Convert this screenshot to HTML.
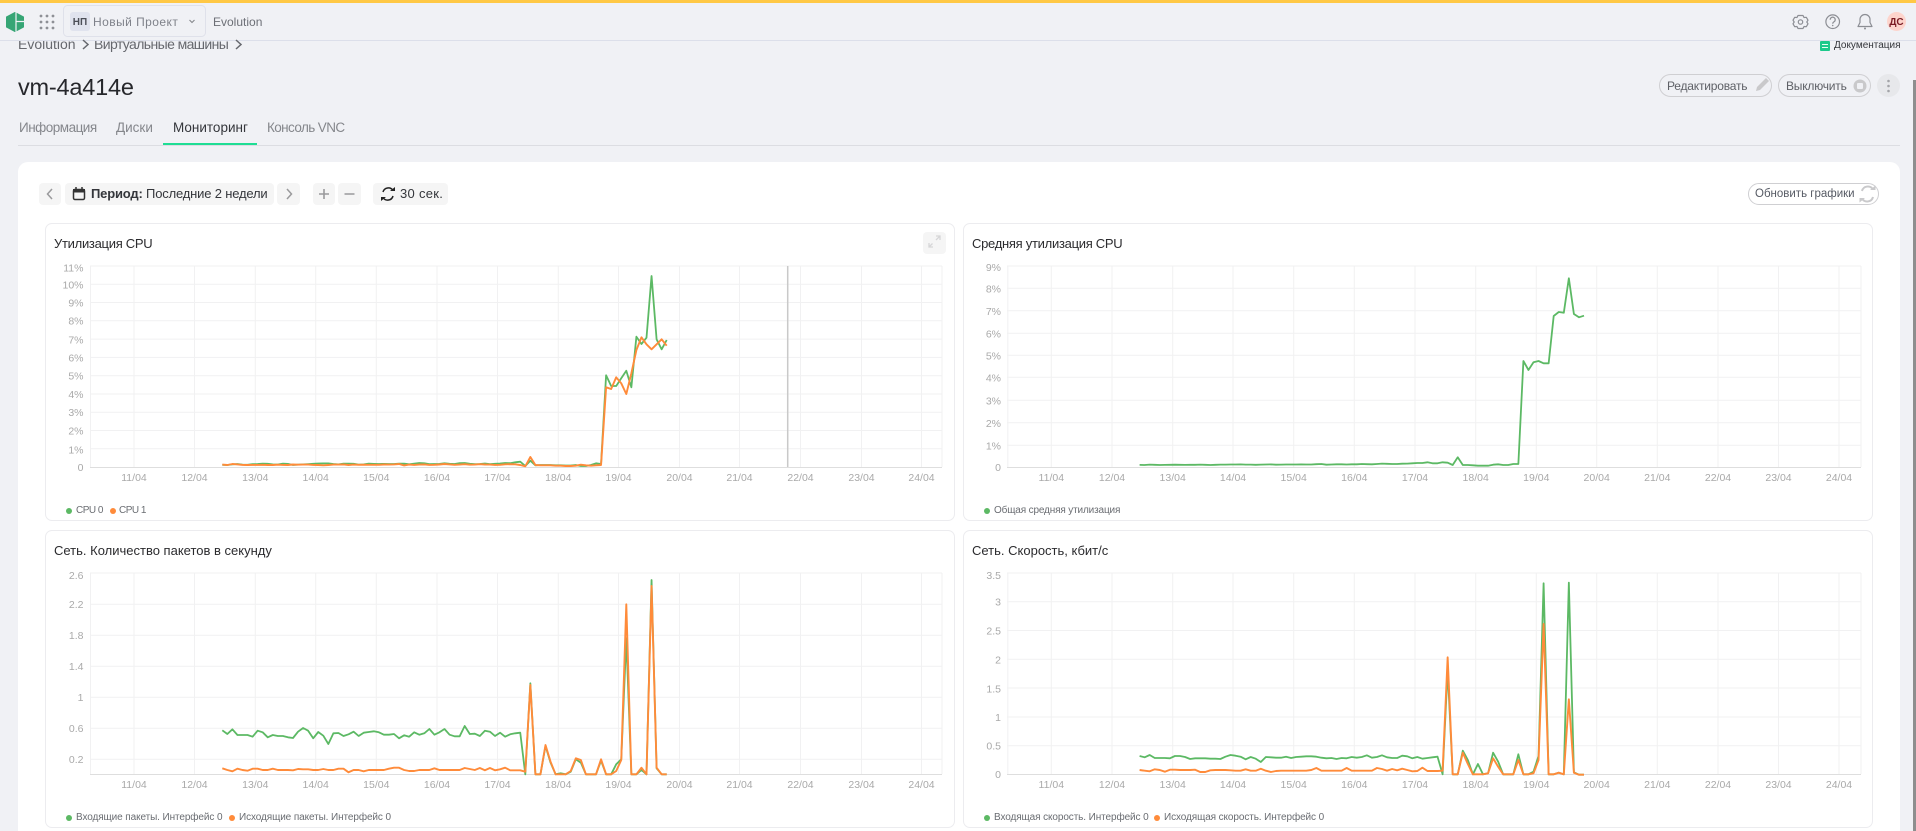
<!DOCTYPE html>
<html lang="ru"><head><meta charset="utf-8"><title>vm-4a414e</title>
<style>
html,body{margin:0;padding:0;width:1916px;height:831px;overflow:hidden;background:#f0f1f5;font-family:"Liberation Sans","Noto Sans CJK SC",sans-serif}
.a{position:absolute;white-space:nowrap}
.t{line-height:20px;height:20px}
.pill{position:absolute;box-sizing:border-box;border:1px solid #cfcfd2;border-radius:12px;height:23px}
.btn{position:absolute;background:#f5f5f5;border-radius:4px;height:22px;top:183px}
svg{position:absolute;left:0;top:0;overflow:hidden}
.gl{stroke:#f1f1f2;stroke-width:1;fill:none}
.ax{stroke:#dedede;stroke-width:1;fill:none}
.s{fill:none;vector-effect:non-scaling-stroke;stroke-linejoin:round}
.g{stroke:#5cb964;stroke-width:1.8}
.o{stroke:#ff8b3a;stroke-width:1.9}
text{font-family:"Liberation Sans",sans-serif}
.lab text{font-size:10.5px;fill:#a9a9a9}
.xl text{text-anchor:middle}
.yl text{text-anchor:end}
.card{position:absolute;box-sizing:border-box;width:910px;height:298px;background:#fff;border:1px solid #ececef;border-radius:7px}
.ct{font-size:13px;color:#2b2b2e}
.lg{font-size:10px;color:#6a6d72}
.d{position:absolute;width:6px;height:6px;border-radius:50%}
</style></head><body>

<!-- content under header -->
<div class="a t" style="left:18px;top:34px;font-size:14px;color:#66686e">Evolution</div>
<div class="a t" style="left:94px;top:34px;font-size:14px;letter-spacing:-.6px;color:#66686e">Виртуальные машины</div>
<svg width="1916" height="831" style="z-index:1"><path d="M83 40l5 4.500-5 4.500M236 40l5 4.500-5 4.500" fill="none" stroke="#66686e" stroke-width="1.500"/></svg>
<div class="a" style="left:18px;top:72px;font-size:23.500px;line-height:30px;color:#26272b;letter-spacing:-.2px">vm-4a414e</div>
<div class="a t" style="left:19px;top:118px;font-size:13.500px;letter-spacing:-.5px;color:#85878c">Информация</div>
<div class="a t" style="left:116px;top:118px;font-size:13.500px;color:#85878c">Диски</div>
<div class="a t" style="left:173px;top:118px;font-size:13.500px;color:#34363b">Мониторинг</div>
<div class="a t" style="left:267px;top:118px;font-size:13.500px;letter-spacing:-.6px;color:#85878c">Консоль VNC</div>
<div class="a" style="left:18px;top:145px;width:1882px;height:1px;background:#dcdde2"></div>
<div class="a" style="left:163px;top:143px;width:94px;height:2px;background:#1fdd94"></div>

<div class="a" style="left:1820px;top:41px;width:9.500px;height:10px;background:#1cc98b;border-radius:1px"></div>
<div class="a" style="left:1822px;top:44px;width:5.500px;height:1px;background:#e8fff4"></div>
<div class="a" style="left:1822px;top:47px;width:5.500px;height:1px;background:#e8fff4"></div>
<div class="a t" style="left:1834px;top:36px;font-size:10px;color:#33353a">Документация</div>

<div class="pill" style="left:1659px;top:74px;width:113px"></div>
<div class="a t" style="left:1667px;top:76px;font-size:12px;letter-spacing:-.2px;color:#5e6066">Редактировать</div>
<div class="pill" style="left:1778px;top:74px;width:93px"></div>
<div class="a t" style="left:1786px;top:76px;font-size:12px;letter-spacing:-.2px;color:#5e6066">Выключить</div>
<div class="a" style="left:1877px;top:74px;width:23px;height:23px;border-radius:50%;background:#e7e8eb"></div>
<svg width="1916" height="831" style="z-index:1">
<path d="M1756 91l1-4 9-9 3 3-9 9z" fill="#c9c9cb"/>
<circle cx="1860" cy="86" r="6.500" fill="#c9c9cb"/><rect x="1857" y="83" width="6" height="6" rx="1" fill="#f0f1f5"/>
<circle cx="1888.500" cy="81" r="1.300" fill="#a3a4a8"/><circle cx="1888.500" cy="86" r="1.300" fill="#a3a4a8"/><circle cx="1888.500" cy="91" r="1.300" fill="#a3a4a8"/>
</svg>

<!-- white panel -->
<div class="a" style="left:18px;top:162px;width:1882px;height:669px;background:#fff;border-radius:10px 10px 0 0"></div>
<div class="btn" style="left:39px;width:22px"></div>
<div class="btn" style="left:65px;width:209px"></div>
<div class="btn" style="left:277px;width:23px"></div>
<div class="btn" style="left:313px;width:22px"></div>
<div class="btn" style="left:338px;width:23px"></div>
<div class="btn" style="left:373px;width:75px"></div>
<div class="a t" style="left:91px;top:184px;font-size:13px;letter-spacing:-.18px;color:#34363b"><b>Период:</b> Последние 2 недели</div>
<div class="a t" style="left:400px;top:184px;font-size:13px;letter-spacing:.3px;color:#34363b">30 сек.</div>
<div class="pill" style="left:1748px;top:183px;width:131px;height:22px"></div>
<div class="a t" style="left:1755px;top:184px;font-size:11.500px;color:#565a64">Обновить графики</div>

<!-- chart cards -->
<div class="card" style="left:45px;top:223px"></div>
<div class="card" style="left:963px;top:223px"></div>
<div class="card" style="left:45px;top:530px"></div>
<div class="card" style="left:963px;top:530px"></div>
<div class="a t ct" style="left:54px;top:234px;letter-spacing:-.28px">Утилизация CPU</div>
<div class="a t ct" style="left:972px;top:234px;letter-spacing:-.28px">Средняя утилизация CPU</div>
<div class="a t ct" style="left:54px;top:541px">Сеть. Количество пакетов в секунду</div>
<div class="a t ct" style="left:972px;top:541px">Сеть. Скорость, кбит/с</div>
<div class="a" style="left:923px;top:232px;width:23px;height:22px;background:#f5f5f5;border-radius:4px"></div>

<div class="d" style="left:66px;top:508px;background:#5cb964"></div><div class="a t lg" style="left:76px;top:501px;letter-spacing:-.5px">CPU 0</div>
<div class="d" style="left:110px;top:508px;background:#ff8b3a"></div><div class="a t lg" style="left:119px;top:501px;letter-spacing:-.5px">CPU 1</div>
<div class="d" style="left:984px;top:508px;background:#5cb964"></div><div class="a t lg" style="left:994px;top:501px;letter-spacing:-.15px">Общая средняя утилизация</div>
<div class="d" style="left:66px;top:815px;background:#5cb964"></div><div class="a t lg" style="left:76px;top:808px;letter-spacing:-.1px">Входящие пакеты. Интерфейс 0</div>
<div class="d" style="left:229px;top:815px;background:#ff8b3a"></div><div class="a t lg" style="left:239px;top:808px;letter-spacing:-.1px">Исходящие пакеты. Интерфейс 0</div>
<div class="d" style="left:984px;top:815px;background:#5cb964"></div><div class="a t lg" style="left:994px;top:808px;letter-spacing:-.1px">Входящая скорость. Интерфейс 0</div>
<div class="d" style="left:1154px;top:815px;background:#ff8b3a"></div><div class="a t lg" style="left:1164px;top:808px;letter-spacing:-.1px">Исходящая скорость. Интерфейс 0</div>

<svg width="1916" height="831" viewBox="0 0 1916 831">
<!-- toolbar icons -->
<path d="M52 189l-4.500 5 4.500 5M287 189l4.500 5-4.500 5" fill="none" stroke="#9a9a9c" stroke-width="1.500"/>
<path d="M319 194h10M324 189v10M344.500 194h10" stroke="#9a9a9c" stroke-width="1.600" fill="none"/>
<rect x="73.500" y="189.500" width="11" height="10" rx="1.500" fill="none" stroke="#333" stroke-width="1.500"/><rect x="73" y="189" width="12" height="3.500" fill="#333"/><path d="M76 187v3M82 187v3" stroke="#333" stroke-width="1.500"/>
<path d="M383 192a5.500 5.500 0 0 1 10-1.500M393 196a5.500 5.500 0 0 1-10 1.500" fill="none" stroke="#222" stroke-width="1.500"/><path d="M390 191h5v-4zM386 197h-5v4z" fill="#222"/>
<path d="M1862 191a6 6 0 0 1 11-1.500M1873 197a6 6 0 0 1-11 1.500" fill="none" stroke="#c9c9cb" stroke-width="2"/><path d="M1870 190h5.500v-4.500zM1865 198h-5.500v4.500z" fill="#c9c9cb"/>
<path d="M932.500 243.500L929 247M929 243v4h4M936 240l4-4M936 236h4v4" fill="none" stroke="#d6d6d8" stroke-width="1.300"/>

<!-- chart 1 grid -->
<path class="gl" d="M90.500 266V467M134 266V467M194.500 266V467M255.300 266V467M315.700 266V467M376.300 266V467M437 266V467M497.500 266V467M558.300 266V467M618.500 266V467M679.500 266V467M739.500 266V467M800.500 266V467M861.500 266V467M921.500 266V467M942 266V467"/>
<path class="gl" d="M90 266H942M90 284.300H942M90 302.500H942M90 320.800H942M90 339.100H942M90 357.400H942M90 375.700H942M90 394H942M90 412.300H942M90 430.500H942M90 448.800H942"/>
<path class="ax" d="M90 467.500H942"/>
<path d="M787.700 266V467" stroke="#c9c9c9" stroke-width="1.500"/>
<!-- chart 2 grid -->
<path class="gl" d="M1007.800 266V467M1051.300 266V467M1112 266V467M1172.700 266V467M1233 266V467M1293.700 266V467M1354.300 266V467M1415 266V467M1475.700 266V467M1536.300 266V467M1596.700 266V467M1657.300 266V467M1718 266V467M1778.500 266V467M1839 266V467M1861 266V467"/>
<path class="gl" d="M1007 266H1861M1007 288.300H1861M1007 310.700H1861M1007 333.300H1861M1007 355.300H1861M1007 377.300H1861M1007 400.300H1861M1007 422.700H1861M1007 445.300H1861"/>
<path class="ax" d="M1007 467.500H1861"/>
<!-- chart 3 grid -->
<path class="gl" d="M90.500 573V774M134 573V774M194.500 573V774M255.300 573V774M315.700 573V774M376.300 573V774M437 573V774M497.500 573V774M558.300 573V774M618.500 573V774M679.500 573V774M739.500 573V774M800.500 573V774M861.500 573V774M921.500 573V774M942 573V774"/>
<path class="gl" d="M90 573H942M90 604.300H942M90 635.300H942M90 666.300H942M90 697.300H942M90 728.300H942M90 759.300H942"/>
<path class="ax" d="M90 774.500H942"/>
<!-- chart 4 grid -->
<path class="gl" d="M1007.800 573V774M1051.300 573V774M1112 573V774M1172.700 573V774M1233 573V774M1293.700 573V774M1354.300 573V774M1415 573V774M1475.700 573V774M1536.300 573V774M1596.700 573V774M1657.300 573V774M1718 573V774M1778.500 573V774M1839 573V774M1861 573V774"/>
<path class="gl" d="M1007 573H1861M1007 601.700H1861M1007 630.500H1861M1007 659.300H1861M1007 688H1861M1007 717H1861M1007 745.700H1861"/>
<path class="ax" d="M1007 774.500H1861"/>

<!-- axis labels -->
<g class="lab xl">
<g transform="translate(0,481)"><text x="134">11/04</text><text x="194.500">12/04</text><text x="255.300">13/04</text><text x="315.700">14/04</text><text x="376.300">15/04</text><text x="437">16/04</text><text x="497.500">17/04</text><text x="558.300">18/04</text><text x="618.500">19/04</text><text x="679.500">20/04</text><text x="739.500">21/04</text><text x="800.500">22/04</text><text x="861.500">23/04</text><text x="921.500">24/04</text></g>
<g transform="translate(0,481)"><text x="1051.300">11/04</text><text x="1112">12/04</text><text x="1172.700">13/04</text><text x="1233">14/04</text><text x="1293.700">15/04</text><text x="1354.300">16/04</text><text x="1415">17/04</text><text x="1475.700">18/04</text><text x="1536.300">19/04</text><text x="1596.700">20/04</text><text x="1657.300">21/04</text><text x="1718">22/04</text><text x="1778.500">23/04</text><text x="1839">24/04</text></g>
<g transform="translate(0,788)"><text x="134">11/04</text><text x="194.500">12/04</text><text x="255.300">13/04</text><text x="315.700">14/04</text><text x="376.300">15/04</text><text x="437">16/04</text><text x="497.500">17/04</text><text x="558.300">18/04</text><text x="618.500">19/04</text><text x="679.500">20/04</text><text x="739.500">21/04</text><text x="800.500">22/04</text><text x="861.500">23/04</text><text x="921.500">24/04</text></g>
<g transform="translate(0,788)"><text x="1051.300">11/04</text><text x="1112">12/04</text><text x="1172.700">13/04</text><text x="1233">14/04</text><text x="1293.700">15/04</text><text x="1354.300">16/04</text><text x="1415">17/04</text><text x="1475.700">18/04</text><text x="1536.300">19/04</text><text x="1596.700">20/04</text><text x="1657.300">21/04</text><text x="1718">22/04</text><text x="1778.500">23/04</text><text x="1839">24/04</text></g>
</g>
<g class="lab yl">
<text x="83.500" y="271.500">11%</text><text x="83.500" y="288.500">10%</text><text x="83.500" y="306.500">9%</text><text x="83.500" y="324.500">8%</text><text x="83.500" y="343.500">7%</text><text x="83.500" y="361.500">6%</text><text x="83.500" y="379.500">5%</text><text x="83.500" y="398">4%</text><text x="83.500" y="416">3%</text><text x="83.500" y="434.500">2%</text><text x="83.500" y="453.500">1%</text><text x="83.500" y="471">0</text>
<text x="1001" y="271">9%</text><text x="1001" y="292.500">8%</text><text x="1001" y="315">7%</text><text x="1001" y="337.500">6%</text><text x="1001" y="359.500">5%</text><text x="1001" y="381.500">4%</text><text x="1001" y="404.500">3%</text><text x="1001" y="427">2%</text><text x="1001" y="449.500">1%</text><text x="1001" y="471">0</text>
<text x="83.500" y="579">2.6</text><text x="83.500" y="608">2.2</text><text x="83.500" y="639">1.8</text><text x="83.500" y="670">1.4</text><text x="83.500" y="701">1</text><text x="83.500" y="732">0.6</text><text x="83.500" y="763">0.2</text>
<text x="1001" y="579">3.5</text><text x="1001" y="605.500">3</text><text x="1001" y="634.500">2.5</text><text x="1001" y="663.500">2</text><text x="1001" y="692.500">1.5</text><text x="1001" y="721">1</text><text x="1001" y="749.500">0.5</text><text x="1001" y="778">0</text>
</g>

<!-- series: x is sample index -->
<g transform="translate(222.300,0) scale(5.050,1)">
<polyline class="s g" points="0,464.9 1,465 2,464.4 3,464 4,464.6 5,464.8 6,464.2 7,464 8,463.6 9,463.8 10,464.4 11,464.5 12,463.7 13,463.9 14,465 15,464.6 16,464.4 17,464.1 18,463.8 19,463.5 20,463.4 21,463.4 22,464 23,464.4 24,463.7 25,463.6 26,463.8 27,464.6 28,464.4 29,463.7 30,463.9 31,464 32,463.9 33,464 34,464 35,463.7 36,463.6 37,464.3 38,463.6 39,463 40,463.3 41,464.1 42,464 43,463.9 44,463.3 45,463.8 46,464 47,463.1 48,463 49,463.8 50,464.1 51,464 52,463.5 53,464.2 54,463.8 55,463.5 56,463 57,463.2 58,462.3 59,461.7 60,466 61,460.7 62,465.3 63,465 64,465 65,465 66,465.3 67,465.3 68,465.5 69,465.5 70,465 71,466 72,466 73,465 74,463.3 75,464 76,375.3 77,386 78,386 79,378.3 80,370.7 81,387.3 82,336.7 83,344 84,337.7 85,276 86,339.3 87,349.3 88,340"/>
<polyline class="s o" points="0,464.6 1,465 2,464 3,464.4 4,464.9 5,465 6,464.9 7,464.9 8,464.8 9,465 10,465 11,464.7 12,464.9 13,465 14,464.5 15,464.7 16,464.6 17,464.6 18,464.9 19,465 20,465.3 21,465 22,464.6 23,464.6 24,464.4 25,465 26,464.6 27,464.8 28,464.7 29,464.8 30,464.8 31,464.8 32,464.5 33,464.6 34,464.4 35,464 36,465.4 37,464.6 38,464.9 39,464.6 40,464.4 41,464.9 42,464.8 43,464.5 44,464 45,464.4 46,464.8 47,464.6 48,464.2 49,464.7 50,464.6 51,464.2 52,464.5 53,464.6 54,464.9 55,464.8 56,464.3 57,464.2 58,464.3 59,465 60,466.3 61,457 62,465 63,465.3 64,465.3 65,465.3 66,465.7 67,465.7 68,466 69,466 70,465.7 71,464.7 72,465.3 73,465.7 74,465.3 75,465 76,387.3 77,389 78,377.3 79,383.3 80,394 81,373.3 82,350 83,337.3 84,344.3 85,349.3 86,344.3 87,339.3 88,345.7"/>
<polyline class="s g" points="0,730.3 1,734 2,729.3 3,735 4,735 5,735 6,736.7 7,730.7 8,732.3 9,737.3 10,735 11,736 12,736 13,737.3 14,738 15,731.7 16,728 17,730.7 18,738.3 19,732 20,735.7 21,744 22,733.3 23,733 24,736 25,734.3 26,731.7 27,736 28,732.7 29,732 30,731.3 31,732.3 32,734.7 33,734.7 34,734 35,738.3 36,735.3 37,736.7 38,732.3 39,734.7 40,733.3 41,729 42,734.7 43,732.3 44,729 45,734.7 46,736.3 47,736.3 48,726 49,734 50,733.7 51,736 52,730.7 53,731.7 54,736 55,732.7 56,736.7 57,734.3 58,733.3 59,732.7 60,774.3 61,683.3 62,774.3 63,774.3 64,746 65,762.7 66,774.3 67,773.3 68,774.3 69,771.7 70,759.3 71,762.7 72,774.3 73,774.3 74,774.3 75,760.7 76,774.3 77,774.3 78,764.3 79,759.3 80,638.3 81,774.3 82,774.3 83,770 84,774.3 85,580 86,768.3 87,774.3 88,774.3"/>
<polyline class="s o" points="0,768.3 1,770 2,771.3 3,768.7 4,770 5,770.7 6,768.7 7,768.7 8,770 9,770 10,768.7 11,770 12,770 13,770 14,770.3 15,769 16,769.3 17,769.3 18,770 19,770 20,769 21,770 22,770 23,768.7 24,768.7 25,772.3 26,770 27,770 28,771.3 29,770 30,770 31,770 32,770 33,768.7 34,767.7 35,767.7 36,770 37,771 38,771 39,770 40,770 41,770 42,768.3 43,770 44,770 45,770 46,770 47,770 48,768 49,769 50,770 51,768 52,770.3 53,768 54,770.3 55,769.3 56,767.7 57,770.3 58,770.3 59,770.3 60,771.7 61,685 62,774.3 63,774.3 64,745 65,761.7 66,774.3 67,774.3 68,774.3 69,771 70,758.3 71,760 72,774.3 73,774.3 74,774.3 75,759.3 76,774.3 77,774.3 78,771 79,760 80,604.3 81,774.3 82,774.3 83,767.7 84,774.3 85,586 86,767.7 87,774.3 88,774.3"/>
</g>
<g transform="translate(1139.600,0) scale(5.050,1)">
<polyline class="s g" points="0,464.9 1,465 2,464.6 3,464.8 4,465 5,464.9 6,464.8 7,464.7 8,464.8 9,464.9 10,464.8 11,464.8 12,464.6 13,464.8 14,465 15,464.8 16,464.6 17,464.6 18,464.5 19,464.5 20,464.4 21,464.6 22,464.6 23,464.8 24,464.6 25,464.5 26,464.4 27,464.7 28,464.6 29,464.5 30,464.5 31,464.5 32,464.4 33,464.5 34,464.5 35,464.2 36,464 37,464.7 38,464.5 39,464.3 40,464.3 41,464.5 42,464.3 43,464.3 44,464 45,464.2 46,464.3 47,464 48,463.6 49,463.8 50,464 51,464 52,463.7 53,463.6 54,463.3 55,463 56,463 57,462.3 58,463.3 59,463.3 60,462.3 61,462.7 62,465 63,457.3 64,465 65,465 66,465.3 67,465.7 68,465.7 69,465.7 70,464.7 71,464.3 72,465 73,465 74,464 75,464 76,361 77,370 78,362.3 79,361 80,363.3 81,363.3 82,316 83,312 84,312.7 85,278.3 86,314 87,317.3 88,315.7"/>
<polyline class="s g" points="0,756 1,757.3 2,755 3,758 4,758 5,758 6,758.3 7,756 8,756 9,757 10,759 11,758.3 12,758.3 13,758.3 14,758.7 15,758.7 16,759 17,756.7 18,755 19,755.7 20,756.7 21,759.3 22,757 23,758.7 24,762 25,757 26,757.3 27,757.7 28,757.7 29,756.7 30,758 31,757 32,756.7 33,756.3 34,756.3 35,756.7 36,757.7 37,758.3 38,758 39,759 40,758 41,758.3 42,757 43,757.7 44,757 45,755.3 46,757.7 47,757 48,755.3 49,757.3 50,758 51,758 52,755.7 53,756.3 54,758.3 55,757 56,758.7 57,758 58,757.3 59,756.7 60,774.3 61,670 62,774.3 63,774.3 64,750.7 65,760 66,774.3 67,764 68,774.3 69,773.3 70,752.7 71,761.7 72,774.3 73,774.3 74,774.3 75,754.3 76,774.3 77,774.3 78,771.7 79,756 80,583.3 81,774.3 82,774.3 83,772.7 84,774.3 85,582.7 86,772.3 87,774.7 88,774.7"/>
<polyline class="s o" points="0,770 1,770.7 2,771.3 3,769.3 4,770 5,771.7 6,769.7 7,769.7 8,770 9,770 10,770 11,769.7 12,772 13,772 14,770.3 15,770 16,770 17,770 18,770.3 19,770.7 20,770.7 21,769.3 22,770.7 23,770.7 24,768.7 25,770.7 26,772 27,771 28,770.7 29,770.7 30,770.7 31,770.7 32,770.7 33,770.7 34,770 35,768 36,770.7 37,770.7 38,770.7 39,770.7 40,770.7 41,768 42,770.7 43,770.7 44,770.7 45,770.7 46,770.7 47,768 48,769 49,770.7 50,769 51,770.3 52,768.7 53,770 54,771.3 55,771 56,767.7 57,771 58,771 59,771 60,770.7 61,657.3 62,774.3 63,774.3 64,752.7 65,764 66,774.3 67,774.3 68,774.3 69,773.3 70,758.3 71,766.7 72,774.3 73,774.3 74,774.3 75,760 76,774.3 77,774.3 78,773.3 79,760 80,624 81,774.3 82,774.3 83,772.7 84,774.3 85,699.3 86,772.7 87,774.7 88,774.7"/>
</g>

<!-- header -->
<rect x="0" y="0" width="1916" height="40.500" fill="#f0f1f5"/>
<rect x="0" y="40" width="1916" height="1" fill="#dcdfea"/>
<rect x="0" y="0" width="1916" height="3" fill="#ffc845"/>
<path d="M15 12.500l8.500 4.500v10l-8.500 4.500-8.500-4.500V17z" fill="#36a575" stroke="#36a575" stroke-width="1" stroke-linejoin="round"/>
<path d="M16 11v10.500h9M16 21.500V33" stroke="#f0f1f5" stroke-width="1.200" fill="none"/>
<g fill="#8e9096"><circle cx="41" cy="16" r="1.400"/><circle cx="47" cy="16" r="1.400"/><circle cx="53" cy="16" r="1.400"/><circle cx="41" cy="22" r="1.400"/><circle cx="47" cy="22" r="1.400"/><circle cx="53" cy="22" r="1.400"/><circle cx="41" cy="28" r="1.400"/><circle cx="47" cy="28" r="1.400"/><circle cx="53" cy="28" r="1.400"/></g>
<rect x="63.500" y="5.500" width="142" height="31" rx="4" fill="none" stroke="#dfe1ea"/>
<rect x="70" y="12" width="20" height="19" rx="3" fill="#e0e3ee"/>
<path d="M189.500 20l2.500 2.500 2.500-2.500" fill="none" stroke="#85878c" stroke-width="1.100"/>
<!-- gear -->
<path d="M1798 15.500h5l1 2 2.300-.2 1.700 2.900-1.200 1.800 1.200 1.800-1.700 2.900-2.300-.2-1 2h-5l-1-2-2.300.2-1.700-2.900 1.200-1.800-1.200-1.800 1.700-2.900 2.300.2z" fill="none" stroke="#8c8e94" stroke-width="1.200" stroke-linejoin="round"/><circle cx="1800.500" cy="22" r="2.200" fill="none" stroke="#8c8e94" stroke-width="1.200"/>
<!-- help -->
<circle cx="1832.700" cy="21.700" r="6.800" fill="none" stroke="#8c8e94" stroke-width="1.200"/><path d="M1830.200 19.700a2.500 2.500 0 1 1 3.800 2.100c-.9.600-1.300 1-1.300 2" fill="none" stroke="#8c8e94" stroke-width="1.200"/><circle cx="1832.700" cy="25.500" r=".8" fill="#8c8e94"/>
<!-- bell -->
<path d="M1865 14.500a5 5 0 0 1 5 5v3l2 4h-14l2-4v-3a5 5 0 0 1 5-5z" fill="none" stroke="#8c8e94" stroke-width="1.200" stroke-linejoin="round"/><circle cx="1865" cy="28.500" r="1" fill="#8c8e94"/>
<circle cx="1896.500" cy="21.500" r="9.500" fill="#fdd4cc"/>
<text x="1896.500" y="25" text-anchor="middle" font-size="10" font-weight="700" fill="#7a1a22">ДС</text>
<text x="80" y="25" text-anchor="middle" font-size="10" font-weight="700" fill="#4c4f58">НП</text>
<text x="93" y="26" font-size="12" letter-spacing=".45" fill="#7f828a">Новый Проект</text>
<text x="213" y="26" font-size="12" fill="#6c6f76">Evolution</text>
<rect x="1913" y="80" width="3" height="751" fill="#8e8e8e"/>
</svg>
</body></html>
